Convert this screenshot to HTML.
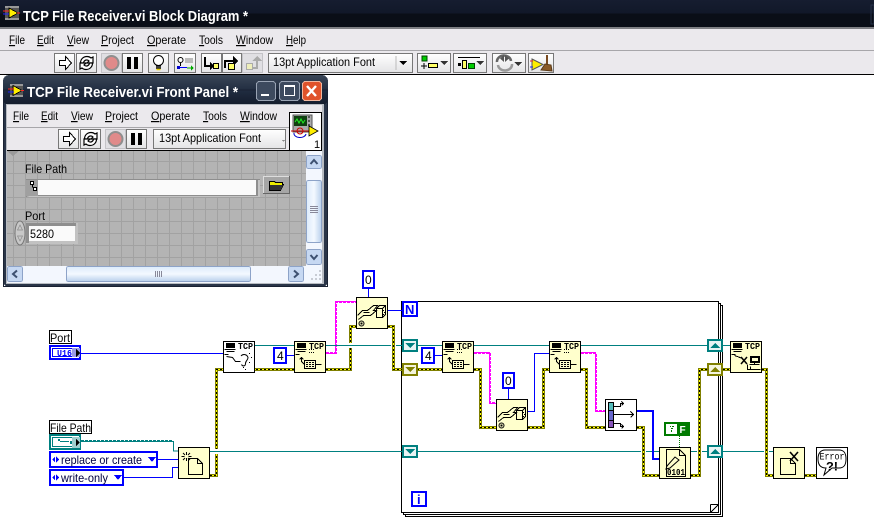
<!DOCTYPE html>
<html><head><meta charset="utf-8"><style>
html,body{margin:0;padding:0;background:#fff;width:874px;height:531px;overflow:hidden}
svg{display:block;font-family:"Liberation Sans",sans-serif}
text{white-space:pre}
.m{font-size:12px;fill:#000}
.t{font-size:15px;font-weight:bold;fill:#fff}
.n{font-size:12px;fill:#000}
.tcp{font-size:9px;font-weight:bold;font-family:"Liberation Mono",monospace;fill:#000}
.y0{fill:none;stroke:#808000;stroke-width:3}
.y1{fill:none;stroke:#ffff00;stroke-width:1}
.y2{fill:none;stroke:#000;stroke-width:1;stroke-dasharray:2 2}
.b{fill:none;stroke:#0000ff;stroke-width:1}
.g{fill:none;stroke:#008080;stroke-width:1}
.p{fill:none;stroke:#ff00ff;stroke-width:2;stroke-dasharray:3 1}
.p1{fill:none;stroke:#ff00ff;stroke-width:1}
.node{fill:#ffffcc;stroke:#000;stroke-width:1}
.wnode{fill:#fff;stroke:#000;stroke-width:1}
.ic{fill:none;stroke:#000;stroke-width:1}
.bc{fill:#fff;stroke:#0000ff;stroke-width:2}
.bt{font-size:12px;fill:#000}
</style></head><body>
<svg width="874" height="531" viewBox="0 0 874 531" xmlns="http://www.w3.org/2000/svg" shape-rendering="crispEdges">
<defs>
<linearGradient id="btn" x1="0" y1="0" x2="0" y2="1"><stop offset="0" stop-color="#fff"/><stop offset="1" stop-color="#e4e4e6"/></linearGradient>
<linearGradient id="tb" x1="0" y1="0" x2="0" y2="1"><stop offset="0" stop-color="#161d30"/><stop offset=".5" stop-color="#111829"/><stop offset=".5" stop-color="#0a0e17"/><stop offset="1" stop-color="#0a0e17"/></linearGradient>
<linearGradient id="fpt" x1="0" y1="0" x2="0" y2="1"><stop offset="0" stop-color="#3a4657"/><stop offset=".55" stop-color="#1f2b3f"/><stop offset="1" stop-color="#141c2c"/></linearGradient>
<linearGradient id="sb" x1="0" y1="0" x2="0" y2="1"><stop offset="0" stop-color="#dcebfb"/><stop offset=".5" stop-color="#f4f9ff"/><stop offset="1" stop-color="#b9d0ec"/></linearGradient>
<linearGradient id="sbv" x1="0" y1="0" x2="1" y2="0"><stop offset="0" stop-color="#dcebfb"/><stop offset=".5" stop-color="#f4f9ff"/><stop offset="1" stop-color="#b9d0ec"/></linearGradient>
<pattern id="grid" x="13" y="161" width="12" height="12" patternUnits="userSpaceOnUse"><rect width="12" height="12" fill="#b4b4b4"/><rect width="1" height="12" fill="#a2a2a2"/><rect width="12" height="1" fill="#a2a2a2"/></pattern>
<g id="comp"><path class="ic" d="M3.500 2.500h8v4h-8zM1.500 8.500h11M3.500 10.500h8M1.500 13.500h4"/><path d="M4 3h7v3H4z" fill="#000"/></g>
<g id="keyb"><path class="ic" d="M7.500 20.500v-4M5.500 18.500l2-2l2 2M7.500 20.500l3 3M10.500 19.500h11v8h-11zM21.500 23.500h6"/><path d="M12 21h2v1h-2zM15 21h2v1h-2zM18 21h2v1h-2zM12 23h2v1h-2zM15 23h2v1h-2zM18 23h2v1h-2zM12 25h2v1h-2zM15 25h2v1h-2zM18 25h2v1h-2z"/><path d="M15 8h1v1h-1zM17 8h1v1h-1zM19 8h1v1h-1zM15 11h1v1h-1zM17 11h1v1h-1zM19 11h1v1h-1z"/></g>
<g id="cast"><path class="ic" d="M1.500 18.500l5-5h5l6-5h4l-4 5h3l-6 5h-7l-5 4M7.500 15.500h6"/><path class="ic" d="M20.500 11.500l3-3h6v9l-3 3h-6zM26.500 11.500v9M20.500 11.500h6M26.500 11.500l3-3"/><path d="M27 13h1v1h-1zM28 15h1v1h-1zM27 17h1v1h-1z"/><circle cx="5.500" cy="26.500" r="2.500" fill="none" stroke="#000" shape-rendering="auto"/><rect x="4.500" y="25.500" width="2" height="2"/></g>
<g id="doc"><path class="ic" d="M10.500 11.500h9l5 5v11h-14zM19.500 11.500v5h5"/></g>
</defs>

<rect width="874" height="531" fill="#fff"/>

<!-- main window chrome -->
<rect width="874" height="27" fill="url(#tb)"/>
<rect y="27" width="874" height="2" fill="#7f8084"/>
<rect y="29" width="874" height="21" fill="#ebe9ed"/>
<rect y="50" width="874" height="1" fill="#a7a6aa"/>
<rect y="51" width="874" height="23" fill="#ebe9ed"/>
<rect y="74" width="874" height="1" fill="#000"/>
<rect x="871" y="5" width="3" height="19" fill="none" stroke="#27324a"/>

<g>
<rect x="5" y="6" width="14" height="14" fill="#555"/>
<path d="M5 6h14v2H5zM5 18h14v2H5z" fill="#999"/>
<path d="M9 8l9 5-9 5z" fill="#ffee00" stroke="#000" stroke-width=".8"/>
<path d="M3 11h6" stroke="#f22"/><path d="M3 14h6" stroke="#22f"/><path d="M17 13h3" stroke="#f22"/>
</g>
<text class="t" x="23" y="21" textLength="225" lengthAdjust="spacingAndGlyphs">TCP File Receiver.vi Block Diagram *</text>

<text class="m" x="9" y="44" textLength="16" lengthAdjust="spacingAndGlyphs"><tspan text-decoration="underline">F</tspan>ile</text>
<text class="m" x="37" y="44" textLength="17" lengthAdjust="spacingAndGlyphs"><tspan text-decoration="underline">E</tspan>dit</text>
<text class="m" x="67" y="44" textLength="22" lengthAdjust="spacingAndGlyphs"><tspan text-decoration="underline">V</tspan>iew</text>
<text class="m" x="101" y="44" textLength="33" lengthAdjust="spacingAndGlyphs"><tspan text-decoration="underline">P</tspan>roject</text>
<text class="m" x="147" y="44" textLength="39" lengthAdjust="spacingAndGlyphs"><tspan text-decoration="underline">O</tspan>perate</text>
<text class="m" x="199" y="44" textLength="24" lengthAdjust="spacingAndGlyphs"><tspan text-decoration="underline">T</tspan>ools</text>
<text class="m" x="236" y="44" textLength="37" lengthAdjust="spacingAndGlyphs"><tspan text-decoration="underline">W</tspan>indow</text>
<text class="m" x="286" y="44" textLength="20" lengthAdjust="spacingAndGlyphs"><tspan text-decoration="underline">H</tspan>elp</text>

<!-- main toolbar -->
<g stroke="#777" fill="url(#btn)">
<rect x="54.500" y="53.500" width="20" height="19"/>
<rect x="76.500" y="53.500" width="20" height="19"/>
<rect x="101.500" y="53.500" width="20" height="19" fill="#e0dfe3" stroke="#c4c3c7"/>
<rect x="122.500" y="53.500" width="20" height="19"/>
<rect x="148.500" y="53.500" width="20" height="19"/>
<rect x="174.500" y="53.500" width="21" height="19"/>
<rect x="201.500" y="53.500" width="20" height="19"/>
<rect x="222.500" y="53.500" width="19" height="19"/>
<rect x="242.500" y="53.500" width="20" height="19" fill="#e0dfe3" stroke="#c4c3c7"/>
<rect x="268.500" y="53.500" width="144" height="19"/>
<rect x="417.500" y="53.500" width="33" height="19"/>
<rect x="453.500" y="53.500" width="33" height="19"/>
<rect x="492.500" y="53.500" width="33" height="19"/>
<rect x="528.500" y="53.500" width="25" height="19"/>
</g>
<path d="M59.500 60.500h6v-4l6 6.500l-6 6.500v-4h-6z" fill="#fff" stroke="#000"/>
<g fill="#fff" stroke="#000" stroke-width="1.200" shape-rendering="auto"><path d="M80.500 63c0-4 3-6.500 6.500-6.500 2 0 3 .5 4 1.500l2-1v6h-6l2-2c-2-2-5-1-5.500 2z"/><path d="M92.500 63c0 4-3 6.500-6.500 6.500-2 0-3-.5-4-1.500l-2 1v-6h6l-2 2c2 2 5 1 5.500-2z"/></g>
<circle cx="111.500" cy="63" r="7" fill="#e08a8a" stroke="#8f8f8f" stroke-width="2" shape-rendering="auto"/>
<rect x="127" y="57" width="4" height="12"/><rect x="134" y="57" width="4" height="12"/>
<g shape-rendering="auto"><circle cx="158.500" cy="60.500" r="5" fill="#fff" stroke="#000"/><path d="M156 66h5M156 68h5" stroke="#000" stroke-width="1.500"/><path d="M156.500 69.500h4" stroke="#e8d000" stroke-width="1.500"/></g>
<g><circle cx="180.500" cy="60" r="2.500" fill="#fff" stroke="#000" shape-rendering="auto"/><path d="M180.500 63v3" stroke="#000"/><rect x="185" y="58" width="8" height="5" fill="#bbb"/><path d="M177 67.500h10" stroke="#00f"/><path d="M187 68h5" stroke="#0a0"/><path d="M191 65.500l3 2.500-3 2.500z" fill="#0a0"/><rect x="177" y="66" width="3" height="3" fill="#00c"/></g>
<path d="M205 57v9h7" stroke="#000" stroke-width="2" fill="none"/><path d="M210 62l4 4-4 4z"/><rect x="213.500" y="63.500" width="5" height="5" fill="#ffff66" stroke="#000"/>
<path d="M225 68v-7h9" stroke="#000" stroke-width="2" fill="none"/><path d="M233 56l5 5-5 5z"/><rect x="228.500" y="63.500" width="6" height="6" fill="#ffff66" stroke="#000"/>
<path d="M253 68h4v-7" stroke="#aaa" stroke-width="2" fill="none"/><path d="M252 61l5-5 5 5z" fill="#aaa"/><rect x="246.500" y="63.500" width="6" height="6" fill="#eeeebb" stroke="#aaa"/>
<text class="m" x="273" y="66" textLength="102" lengthAdjust="spacingAndGlyphs">13pt Application Font</text>
<path d="M396 56v14" stroke="#bbb"/><path d="M399 61h8l-4 4z"/>
<rect x="422" y="56" width="5" height="5" fill="#0c0" stroke="#040"/><path d="M424 63v6M421 66h6" stroke="#000"/><rect x="428.500" y="63.500" width="9" height="4" fill="#ff6" stroke="#000"/><path d="M440 61h8l-4 4z" fill="#333"/>
<path d="M458 57.500h22" stroke="#000"/><rect x="458" y="63" width="3" height="3"/><rect x="462.500" y="60.500" width="4" height="8" fill="#ff6" stroke="#000"/><rect x="468.500" y="63.500" width="6" height="5" fill="#0c0" stroke="#040"/><path d="M476 61h8l-4 4z" fill="#333"/>
<g shape-rendering="auto"><path d="M497 62a7 6 0 0 1 14-1" fill="none" stroke="#666" stroke-width="2.500"/><path d="M512 64a7 6 0 0 1-14 1" fill="none" stroke="#999" stroke-width="2.500"/><path d="M504 55l-4 3.500 4 3.500zM505 55l4 3.500-4 3.500z" fill="#555"/></g><path d="M514 62h8l-4 4z" fill="#333"/>
<g shape-rendering="auto"><path d="M532 59l11 5.500-11 5.500z" fill="#ffee00" stroke="#555"/><path d="M530 61h3" stroke="#e22"/><path d="M530 67h3" stroke="#22e"/><path d="M547 55v9" stroke="#7a4a20" stroke-width="2"/><path d="M541 70l4-6 6 1 1 6z" fill="#8a5a28" stroke="#5a3a18"/></g>

<!-- loop frame -->
<rect x="405.500" y="305.500" width="317" height="211" fill="#fff" stroke="#000"/>
<rect x="403.500" y="303.500" width="317" height="211" fill="#fff" stroke="#000"/>
<rect x="401.500" y="301.500" width="317" height="211" fill="#fff" stroke="#000"/>
<path d="M710.500 504.500h8v8M710.500 504.500v8M710.500 512.500l8-8" fill="none" stroke="#000"/>

<!-- thin wires -->
<path class="b" d="M81 353.500H224"/>
<path class="b" d="M158 459.500H178"/>
<path class="b" d="M124 477.500H172.500V467.500H178"/>
<path class="b" d="M286 355.500H294"/>
<path class="b" d="M368.500 288V297"/>
<path class="b" d="M388 310.500H402"/>
<path class="b" d="M434 355.500H442"/>
<path class="b" d="M508.500 388V399"/>
<path class="b" d="M528 411.500H534.500V353.500H549"/>
<path fill="none" stroke="#0000ff" stroke-width="2" d="M637 411H653V459H660"/>

<!-- pink -->
<path class="p1" d="M326 353.500H335.500V301.500H356"/><path class="p" d="M326 353H336V302H356"/>
<path class="p1" d="M474 352.500H489.500V403.500H496"/><path class="p" d="M474 353H490V403H496"/>
<path class="p1" d="M581 352.500H595.500V411.500H605"/><path class="p" d="M581 353H596V411H605"/>

<!-- error wires -->
<path class="y0" d="M210 475.500H216.500V369.500H294"/><path class="y1" d="M210 475.500H216.500V369.500H294"/><path class="y2" d="M210 475.500H216.500V369.500H294"/>
<path class="y0" d="M326 369.500H350.500V326.500H356"/><path class="y1" d="M326 369.500H350.500V326.500H356"/><path class="y2" d="M326 369.500H350.500V326.500H356"/>
<path class="y0" d="M388 326.500H393.500V369.500H402"/><path class="y1" d="M388 326.500H393.500V369.500H402"/><path class="y2" d="M388 326.500H393.500V369.500H402"/>
<path class="y0" d="M417 369.500H442"/><path class="y1" d="M417 369.500H442"/><path class="y2" d="M417 369.500H442"/>
<path class="y0" d="M474 369.500H480.500V427.500H496"/><path class="y1" d="M474 369.500H480.500V427.500H496"/><path class="y2" d="M474 369.500H480.500V427.500H496"/>
<path class="y0" d="M528 427.500H543.500V369.500H549"/><path class="y1" d="M528 427.500H543.500V369.500H549"/><path class="y2" d="M528 427.500H543.500V369.500H549"/>
<path class="y0" d="M581 369.500H586.500V427.500H605"/><path class="y1" d="M581 369.500H586.500V427.500H605"/><path class="y2" d="M581 369.500H586.500V427.500H605"/>
<path class="y0" d="M637 427.500H643.500V475.500H659"/><path class="y1" d="M637 427.500H643.500V475.500H659"/><path class="y2" d="M637 427.500H643.500V475.500H659"/>
<path class="y0" d="M691 475.500H699.500V369.500H707"/><path class="y1" d="M691 475.500H699.500V369.500H707"/><path class="y2" d="M691 475.500H699.500V369.500H707"/>
<path class="y0" d="M723 369.500H730"/><path class="y1" d="M723 369.500H730"/><path class="y2" d="M723 369.500H730"/>
<path class="y0" d="M762 369.500H766.500V475.500H773"/><path class="y1" d="M762 369.500H766.500V475.500H773"/><path class="y2" d="M762 369.500H766.500V475.500H773"/>
<path class="y0" d="M805 475.500H816"/><path class="y1" d="M805 475.500H816"/><path class="y2" d="M805 475.500H816"/>

<!-- gaps in error wires where refnum passes -->
<rect x="214" y="449" width="6" height="5" fill="#fff"/>
<rect x="348" y="343" width="6" height="5" fill="#fff"/>

<!-- teal wires -->
<path class="g" d="M255 345.500H391M396 345.500H402M417 345.500H442M474 345.500H549M581 345.500H707M723 345.500H730"/>
<path class="g" d="M210 451.500H402M417 451.500H641M646 451.500H652M654 451.500H659M691 451.500H697M702 451.500H707M723 451.500H764M769 451.500H773"/>
<path fill="none" stroke="#008080" stroke-width="1" d="M81 441.500H173.500V451H178"/>
<path fill="none" stroke="#008080" stroke-width="2" stroke-dasharray="3 1" d="M81 441H173"/>

<!-- tunnels -->
<g fill="#e8f4f4" stroke="#008080" stroke-width="2">
<rect x="403" y="340" width="14" height="11"/>
<rect x="403" y="446" width="14" height="11"/>
<rect x="708" y="340" width="14" height="11"/>
<rect x="708" y="446" width="14" height="11"/>
</g>
<g fill="#f4f4dc" stroke="#808000" stroke-width="2">
<rect x="403" y="364" width="14" height="11"/>
<rect x="708" y="364" width="14" height="11"/>
</g>
<path d="M405 343h10l-5 5z" fill="#008080"/><path d="M405 449h10l-5 5z" fill="#008080"/>
<path d="M405 367h10l-5 5z" fill="#808000"/>
<path d="M710 348h10l-5-5z" fill="#008080"/><path d="M710 454h10l-5-5z" fill="#008080"/>
<path d="M710 372h10l-5-5z" fill="#808000"/>

<!-- constants -->
<rect class="bc" x="363" y="271" width="11" height="17"/><text class="bt" x="365" y="284">0</text>
<rect class="bc" x="403" y="302" width="14" height="14"/><text x="405" y="314" font-size="13" font-weight="bold" fill="#0000ff">N</text>
<rect class="bc" x="274" y="348" width="12" height="15"/><text class="bt" x="277" y="360">4</text>
<rect class="bc" x="422" y="348" width="12" height="15"/><text class="bt" x="425" y="360">4</text>
<rect class="bc" x="503" y="373" width="11" height="15"/><text class="bt" x="505" y="385">0</text>
<rect class="bc" x="412" y="492" width="14" height="14"/><text x="417" y="504" font-size="13" font-weight="bold" fill="#0000ff">i</text>

<!-- nodes -->
<g transform="translate(223,341)"><rect class="wnode" x=".5" y=".5" width="31" height="31"/><use href="#comp"/><text class="tcp" x="15" y="8" textLength="15" lengthAdjust="spacingAndGlyphs">TCP</text>
<path class="ic" d="M3.500 15.500l6 1 3 4h5M18 15a4 4 0 0 1 7 1.500c0 3-2.500 3-2.500 6s-3 3-4 1" shape-rendering="auto"/><path d="M26 12h1v1h-1zM28 16h1v1h-1zM26 21h1v1h-1zM20 26h1v1h-1zM22 28h1v1h-1z"/></g>
<g transform="translate(294,341)"><rect class="node" x=".5" y=".5" width="31" height="31"/><use href="#comp"/><use href="#keyb"/><text class="tcp" x="15" y="8" textLength="15" lengthAdjust="spacingAndGlyphs">TCP</text></g>
<g transform="translate(356,297)"><rect class="node" x=".5" y=".5" width="31" height="31"/><use href="#cast"/></g>
<g transform="translate(442,341)"><rect class="node" x=".5" y=".5" width="31" height="31"/><use href="#comp"/><use href="#keyb"/><text class="tcp" x="15" y="8" textLength="15" lengthAdjust="spacingAndGlyphs">TCP</text></g>
<g transform="translate(496,399)"><rect class="node" x=".5" y=".5" width="31" height="31"/><use href="#cast"/></g>
<g transform="translate(549,341)"><rect class="node" x=".5" y=".5" width="31" height="31"/><use href="#comp"/><use href="#keyb"/><text class="tcp" x="15" y="8" textLength="15" lengthAdjust="spacingAndGlyphs">TCP</text></g>
<g transform="translate(605,399)"><rect class="wnode" x=".5" y=".5" width="31" height="31"/>
<rect x="3.500" y="3.500" width="5" height="8" fill="#55bbbb" stroke="#000"/><rect x="3.500" y="11.500" width="5" height="10" fill="#6666cc" stroke="#000"/><rect x="3.500" y="21.500" width="5" height="7" fill="#8855bb" stroke="#000"/>
<path class="ic" d="M8.500 7.500h7v-3h3M16.500 2.500l2 2-2 2M8.500 15.500h20M25.500 12.500l3 3-3 3M8.500 24.500h7v3h3M16.500 25.500l2 2-2 2"/></g>
<g transform="translate(659,447)"><rect class="node" x=".5" y=".5" width="31" height="31"/>
<path class="ic" d="M7.500 2.500h13l6 6v21h-19zM20.500 2.500v6h6"/><path class="ic" d="M8 19l8-9 4 3-9 8-4 1z" stroke-width="1.300" shape-rendering="auto"/><text x="8" y="28" font-size="9" font-weight="bold" font-family="Liberation Mono, monospace" textLength="18" lengthAdjust="spacingAndGlyphs">0101</text></g>
<rect x="665" y="423" width="24" height="12" fill="#fff" stroke="#007a00" stroke-width="2"/>
<rect x="677" y="424" width="11" height="10" fill="#007a00"/>
<text x="679.500" y="433" font-size="10" font-weight="bold" fill="#fff">F</text>
<path d="M670 426h1v1h-1zM672 426h2v1h-2zM671 428h2v1h-2zM671 430h1v2h-1z" fill="#007a00"/>
<path d="M679.500 436v11" stroke="#007a00" stroke-dasharray="1 1"/>
<g transform="translate(730,341)"><rect class="node" x=".5" y=".5" width="31" height="31"/><use href="#comp"/><text class="tcp" x="15" y="8" textLength="15" lengthAdjust="spacingAndGlyphs">TCP</text>
<path class="ic" d="M4.500 14.500l8 3v1"/><path d="M11 16l6 7M17 16l-6 7" stroke="#000" stroke-width="1.500" shape-rendering="auto"/><rect x="20.500" y="15.500" width="9" height="6" fill="#000" stroke="#000"/><rect x="22" y="17" width="6" height="3" fill="#ffc"/><path class="ic" d="M19.500 23.500h10M24.500 21.500v2M17.500 23.500v5h13M20.500 25.500v3"/></g>
<g transform="translate(178,447)"><rect class="node" x=".5" y=".5" width="31" height="31"/><use href="#doc"/><path class="ic" d="M8.500 5v3M8.500 11v3M3.500 9.500h3M10.500 9.500h3M5 6l2 2M12 6l-2 2M5 13l2-2M12 13l-2-2" shape-rendering="auto"/></g>
<g transform="translate(773,447)"><rect class="node" x=".5" y=".5" width="31" height="31"/><path class="ic" d="M7.500 11.500h10l5 5v11h-15zM17.500 11.500v5h5"/><path d="M17 5l8 9M25 5l-8 9" stroke="#000" stroke-width="1.600" fill="none" shape-rendering="auto"/></g>
<g transform="translate(816,447)"><rect class="wnode" x=".5" y=".5" width="31" height="31"/>
<path class="ic" d="M9 3h14c5 0 7 3 7 9s-2 9-7 9h-7l-8 7 2-7c-5 0-8-3-8-9s3-9 7-9z" shape-rendering="auto"/>
<text x="3.500" y="12.500" font-size="10" font-family="Liberation Mono, monospace" textLength="25" lengthAdjust="spacingAndGlyphs">Error</text>
<text x="10" y="23.500" font-size="12" font-weight="bold" textLength="12" lengthAdjust="spacingAndGlyphs">?!</text></g>

<!-- labels and terminals -->
<rect x="49.500" y="330.500" width="22" height="13" fill="#fff" stroke="#000"/><text class="n" x="50" y="342" textLength="20" lengthAdjust="spacingAndGlyphs">Port</text>
<rect x="50" y="346" width="30" height="13" fill="#fff" stroke="#0000ff" stroke-width="2"/>
<rect x="52.500" y="348.500" width="21" height="8" fill="#fff" stroke="#0000ff"/>
<rect x="72" y="348" width="8" height="9" fill="#9a9ae8"/>
<text x="57" y="356" font-size="9" font-weight="bold" font-family="Liberation Mono, monospace" fill="#0000ff" textLength="15" lengthAdjust="spacingAndGlyphs">U16</text>
<path d="M76 349l4 4-4 4z" fill="#000"/>

<rect x="49.500" y="420.500" width="42" height="13" fill="#fff" stroke="#000"/><text class="n" x="50" y="432" textLength="41" lengthAdjust="spacingAndGlyphs">File Path</text>
<rect x="50" y="435" width="30" height="14" fill="#fff" stroke="#008080" stroke-width="2"/>
<rect x="52.500" y="437.500" width="21" height="9" fill="#fff" stroke="#008080"/>
<rect x="72" y="437" width="8" height="11" fill="#9fcfcf"/>
<path d="M58 439h2v2h-2zM60 441h9v1h-9zM70 441h2v3h-2z" fill="#008080"/>
<path d="M76 439l4 3.500-4 3.500z" fill="#000"/>

<rect x="50" y="452" width="107" height="15" fill="#fff" stroke="#0000ff" stroke-width="2"/>
<path d="M52 459.500l3-3v6zM59 459.500l-3-3v6z" fill="#0000ff"/>
<text x="61" y="464" font-size="12" textLength="81" lengthAdjust="spacingAndGlyphs" fill="#000040">replace or create</text>
<path d="M148 457h8l-4 5z" fill="#0000ff"/>
<rect x="50" y="470" width="73" height="15" fill="#fff" stroke="#0000ff" stroke-width="2"/>
<path d="M52 477.500l3-3v6zM59 477.500l-3-3v6z" fill="#0000ff"/>
<text x="61" y="482" font-size="12" textLength="47" lengthAdjust="spacingAndGlyphs" fill="#000040">write-only</text>
<path d="M114 475h8l-4 5z" fill="#0000ff"/>

<!-- ====== Front panel window ====== -->
<rect x="3" y="75" width="325" height="212" rx="6" fill="#2a3548"/>
<rect x="3" y="75" width="325" height="30" rx="6" fill="url(#fpt)"/>
<rect x="3.500" y="90" width="324" height="196.500" fill="none" stroke="#1a2233"/>
<rect x="6" y="104" width="318" height="180" fill="#b8bcc2"/>
<rect x="7" y="105" width="315" height="46" fill="#ebe9ed"/>
<rect x="7" y="127" width="282" height="1" fill="#a7a6aa"/>
<rect x="7" y="150" width="315" height="1" fill="#000"/>
<rect x="7" y="151" width="299" height="115" fill="url(#grid)"/>

<g>
<rect x="10" y="84" width="13" height="13" fill="#555"/><path d="M10 84h13v2H10zM10 95h13v2H10z" fill="#999"/>
<path d="M13 85.500l9 5-9 5z" fill="#ffee00" stroke="#000" stroke-width=".8"/>
<path d="M8 89h6" stroke="#f22"/><path d="M8 92h6" stroke="#22f"/><path d="M21 90.500h3" stroke="#f22"/>
</g>
<text class="t" x="27" y="97" textLength="211" lengthAdjust="spacingAndGlyphs">TCP File Receiver.vi Front Panel *</text>
<rect x="256.500" y="81.500" width="19" height="19" rx="3" fill="#3d4a5e" stroke="#9aa4b4"/>
<rect x="261" y="94" width="8" height="2" fill="#fff"/>
<rect x="279.500" y="81.500" width="20" height="19" rx="3" fill="#3d4a5e" stroke="#9aa4b4"/>
<rect x="284.500" y="85.500" width="10" height="10" fill="none" stroke="#fff"/><rect x="284" y="85" width="11" height="2" fill="#fff"/>
<rect x="302.500" y="81.500" width="19" height="19" rx="3" fill="#e0532b" stroke="#f0b8a0"/>
<path d="M307 86l9 10M316 86l-9 10" stroke="#fff" stroke-width="2.400" shape-rendering="auto"/>

<text class="m" x="13" y="120" textLength="16" lengthAdjust="spacingAndGlyphs"><tspan text-decoration="underline">F</tspan>ile</text>
<text class="m" x="41" y="120" textLength="17" lengthAdjust="spacingAndGlyphs"><tspan text-decoration="underline">E</tspan>dit</text>
<text class="m" x="71" y="120" textLength="22" lengthAdjust="spacingAndGlyphs"><tspan text-decoration="underline">V</tspan>iew</text>
<text class="m" x="105" y="120" textLength="33" lengthAdjust="spacingAndGlyphs"><tspan text-decoration="underline">P</tspan>roject</text>
<text class="m" x="151" y="120" textLength="39" lengthAdjust="spacingAndGlyphs"><tspan text-decoration="underline">O</tspan>perate</text>
<text class="m" x="203" y="120" textLength="24" lengthAdjust="spacingAndGlyphs"><tspan text-decoration="underline">T</tspan>ools</text>
<text class="m" x="240" y="120" textLength="37" lengthAdjust="spacingAndGlyphs"><tspan text-decoration="underline">W</tspan>indow</text>

<g stroke="#777" fill="url(#btn)">
<rect x="58.500" y="129.500" width="20" height="19"/>
<rect x="80.500" y="129.500" width="20" height="19"/>
<rect x="105.500" y="129.500" width="20" height="19" fill="#e0dfe3" stroke="#c4c3c7"/>
<rect x="126.500" y="129.500" width="20" height="19"/>
<rect x="153.500" y="129.500" width="132" height="19"/>
</g>
<path d="M63.500 136.500h6v-4l6 6.500l-6 6.500v-4h-6z" fill="#fff" stroke="#000"/>
<g fill="#fff" stroke="#000" stroke-width="1.200" shape-rendering="auto"><path d="M84.500 139c0-4 3-6.500 6.500-6.500 2 0 3 .5 4 1.500l2-1v6h-6l2-2c-2-2-5-1-5.500 2z"/><path d="M96.500 139c0 4-3 6.500-6.500 6.500-2 0-3-.5-4-1.500l-2 1v-6h6l-2 2c2 2 5 1 5.500-2z"/></g>
<circle cx="115.500" cy="139" r="7" fill="#e08a8a" stroke="#8f8f8f" stroke-width="2" shape-rendering="auto"/>
<rect x="131" y="133" width="4" height="12"/><rect x="138" y="133" width="4" height="12"/>
<text class="m" x="159" y="142" textLength="102" lengthAdjust="spacingAndGlyphs">13pt Application Font</text>
<path d="M282 140h3l-1.500 2z" fill="#888"/>

<rect x="289.500" y="112.500" width="32" height="38" fill="#fff" stroke="#000"/>
<rect x="293" y="115" width="19" height="17" fill="#aaa" stroke="#555"/>
<rect x="294" y="116" width="13" height="10" fill="#104010"/>
<path d="M295 122l2-3 2 4 2-4 2 4 2-3" fill="none" stroke="#2e2" shape-rendering="auto"/>
<path d="M308 116h2v2h-2zM308 120h2v2h-2zM308 124h2v2h-2z" fill="#555"/>
<circle cx="300" cy="131" r="3" fill="none" stroke="#c00" shape-rendering="auto"/>
<path d="M291 131h27" stroke="#c00"/>
<path d="M294 133a6 4 0 0 0 12 1" fill="none" stroke="#00c" shape-rendering="auto"/>
<path d="M309 126l9 5-9 5z" fill="#ffee00" stroke="#000" stroke-width=".8" shape-rendering="auto"/>
<text x="314" y="148" font-size="11" fill="#000">1</text>

<text class="n" x="25" y="173" textLength="42" lengthAdjust="spacingAndGlyphs">File Path</text>
<rect x="26" y="179" width="234" height="18" fill="#8e8e8e"/>
<path d="M26 197l3-1h231v1z" fill="#c4c4c4"/>
<rect x="258" y="180" width="2" height="17" fill="#c4c4c4"/>
<rect x="38" y="180" width="218" height="15" fill="#fafafa"/>
<rect x="26" y="180" width="12" height="16" fill="#a0a0a0"/>
<path d="M30.500 181.500h3v3h-3zM33.500 187.500h3v3h-3zM32.500 184.500v3" fill="#fff" stroke="#000"/>
<rect x="263" y="176" width="27" height="18" fill="#a6a6a6"/>
<path d="M263 176h27v1h-27zM263 176h1v18h-1z" fill="#ddd"/><path d="M263 193h27v1h-27zM289 176h1v18h-1z" fill="#666"/>
<path d="M269.500 181.500h5l1 1h7v2h1l-3 6h-11z" fill="#eeee00" stroke="#000"/><path d="M270 185h13l-2 5h-11z" fill="#333"/>
<text class="n" x="25" y="220" textLength="20" lengthAdjust="spacingAndGlyphs">Port</text>
<path d="M15 233a5 12 0 0 1 10 0a5 12 0 0 1-10 0z" fill="#c8c8c8" stroke="#777" shape-rendering="auto"/>
<path d="M20 225l-2.500 5h5zM20 241l-2.500-5h5z" fill="#c8c8c8" stroke="#8a8a8a" stroke-width=".7" shape-rendering="auto"/>
<rect x="26" y="223" width="52" height="21" fill="#c2c2c2"/>
<rect x="26" y="223" width="50" height="3" fill="#8e8e8e"/>
<rect x="26" y="223" width="3" height="20" fill="#8e8e8e"/>
<rect x="29" y="226" width="46" height="15" fill="#fafafa"/>
<text class="n" x="30" y="238" textLength="24" lengthAdjust="spacingAndGlyphs">5280</text>
<path d="M7 151l6 5 6-5z" fill="#9a9a9a"/>

<rect x="306" y="151" width="16" height="115" fill="#f3f7fe"/>
<rect x="7" y="266" width="315" height="17" fill="#f3f7fe"/>
<rect x="306.500" y="155.500" width="15" height="13" rx="2" fill="#c6d8f2" stroke="#8da3c8"/>
<path d="M310.500 164l3.500-4 3.500 4" fill="none" stroke="#3d5070" stroke-width="2" shape-rendering="auto"/>
<rect x="306.500" y="180.500" width="15" height="62" rx="2" fill="url(#sbv)" stroke="#8da3c8"/>
<path d="M310 206.500h8M310 208.500h8M310 210.500h8M310 212.500h8" stroke="#889"/>
<rect x="306.500" y="249.500" width="15" height="15" rx="2" fill="#c6d8f2" stroke="#8da3c8"/>
<path d="M310.500 255l3.500 4 3.500-4" fill="none" stroke="#3d5070" stroke-width="2" shape-rendering="auto"/>
<rect x="7.500" y="266.500" width="15" height="15" rx="2" fill="#c6d8f2" stroke="#8da3c8"/>
<path d="M17 270.500l-4 3.500 4 3.500" fill="none" stroke="#3d5070" stroke-width="2" shape-rendering="auto"/>
<rect x="66.500" y="266.500" width="184" height="15" rx="2" fill="url(#sb)" stroke="#8da3c8"/>
<path d="M155.500 271v6M157.500 271v6M159.500 271v6M161.500 271v6" stroke="#889"/>
<rect x="288.500" y="266.500" width="15" height="15" rx="2" fill="#c6d8f2" stroke="#8da3c8"/>
<path d="M294 270.500l4 3.500-4 3.500" fill="none" stroke="#3d5070" stroke-width="2" shape-rendering="auto"/>
<path d="M319 270h2v2h-2zM315 274h2v2h-2zM319 274h2v2h-2zM311 278h2v2h-2zM315 278h2v2h-2zM319 278h2v2h-2z" fill="#c8ccd4"/>
</svg>
</body></html>
